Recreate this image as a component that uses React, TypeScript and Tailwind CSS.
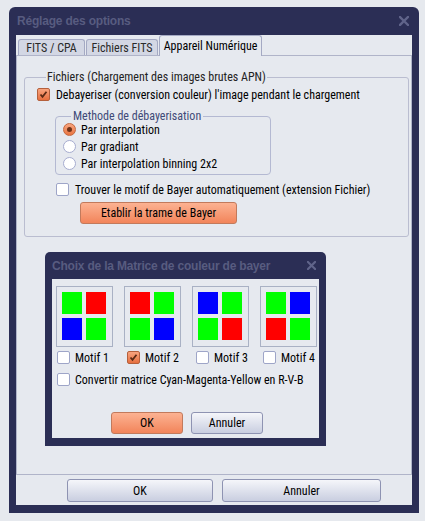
import React from "react";

const G = "#00ff00";
const R = "#ff0000";
const B = "#0000ff";

function Check({ checked = false }: { checked?: boolean }) {
  if (checked) {
    return (
      <span className="w-[13px] h-[13px] shrink-0 rounded-[2px] border border-[#b5603c] bg-linear-to-b from-[#f7a47e] to-[#e66f3e] flex items-center justify-center">
        <svg width="9" height="9" viewBox="0 0 9 9">
          <path d="M1.5 4.5 L3.5 6.8 L7.5 1.8" fill="none" stroke="#5a2a14" strokeWidth="1.8" />
        </svg>
      </span>
    );
  }
  return <span className="w-[13px] h-[13px] shrink-0 rounded-[2px] border border-[#9ea5c8] bg-white" />;
}

function Radio({ checked = false }: { checked?: boolean }) {
  if (checked) {
    return (
      <span className="w-[13px] h-[13px] shrink-0 rounded-full border border-[#c4683f] bg-linear-to-b from-[#f8a57f] to-[#e9743f] flex items-center justify-center">
        <span className="w-[5px] h-[5px] rounded-full bg-[#6e3218]" />
      </span>
    );
  }
  return <span className="w-[13px] h-[13px] shrink-0 rounded-full border border-[#a6acd0] bg-white" />;
}

function CloseX({ size = 10 }: { size?: number }) {
  return (
    <svg width={size} height={size} viewBox="0 0 10 10">
      <path d="M1 1 L9 9 M9 1 L1 9" stroke="#60648a" strokeWidth="2.4" strokeLinecap="square" />
    </svg>
  );
}

function Motif({ cells }: { cells: string[] }) {
  return (
    <div className="w-[57px] h-[61px] border border-[#a9b1c4] pt-[5px] pl-[5px]">
      <div className="grid grid-cols-[20px_20px] grid-rows-[22px_22px] gap-[4px]">
        {cells.map((c, i) => (
          <div key={i} style={{ backgroundColor: c }} />
        ))}
      </div>
    </div>
  );
}

const grayBtn =
  "h-[23px] rounded-[3px] border border-[#8e93b2] bg-linear-to-b from-[#f5f6fa] to-[#c9cee0] flex items-center justify-center text-black";
const orangeBtn =
  "rounded-[3px] border border-[#c27a5c] bg-linear-to-b from-[#fcb292] to-[#f2845a] flex items-center justify-center text-black";

export default function App() {
  const motifs = [
    { cells: [G, R, B, G], label: "Motif 1", checked: false, ml: "ml-[1px]" },
    { cells: [R, G, G, B], label: "Motif 2", checked: true, ml: "ml-[3px]" },
    { cells: [B, G, G, R], label: "Motif 3", checked: false, ml: "ml-[4px]" },
    { cells: [G, B, R, G], label: "Motif 4", checked: false, ml: "ml-[3px]" },
  ];

  return (
    <div className="min-h-[521px] bg-[#e6e9ee] pt-[7px] pl-[9px] font-['Roboto',sans-serif] [font-stretch:75%] text-[12px] text-black">
      <div className="w-[410px] h-[506px] rounded-t-[6px] bg-[#2b2e55] flex flex-col px-[7px] pb-[8px]">
        {/* Title bar */}
        <div className="h-[28px] flex items-center justify-between pl-[1px] pr-[3px] rounded-t-[6px]">
          <span className="font-['Liberation_Sans',sans-serif] [font-stretch:100%] font-bold text-[12px] tracking-[-0.2px] text-[#585c80] whitespace-nowrap">
            Réglage des options
          </span>
          <CloseX />
        </div>

        {/* Client area */}
        <div className="flex-1 bg-[#e6e9ef] flex flex-col">
          {/* Tabs */}
          <div className="h-[20px] flex items-end pl-[2px]">
            <div className="w-[67px] h-[16px] rounded-t-[3px] border border-b-0 border-[#a4a9c3] bg-[#d3d7e4] flex items-center justify-center text-[#2a2a2a] whitespace-nowrap leading-none">
              FITS / CPA
            </div>
            <div className="ml-[1px] w-[72px] h-[16px] rounded-t-[3px] border border-b-0 border-[#a4a9c3] bg-[#d3d7e4] flex items-center justify-center text-[#2a2a2a] whitespace-nowrap leading-none">
              Fichiers FITS
            </div>
            <div className="ml-[1px] w-[103px] h-[21px] -mb-[1px] relative z-10 rounded-t-[3px] border border-b-0 border-[#a4a9c3] bg-[#e6e9ef] flex items-center justify-center whitespace-nowrap leading-none pb-[1px]">
              Appareil Numérique
            </div>
          </div>

          {/* Tab panel */}
          <div className="h-[420px] border border-[#b0b4c9] flex flex-col">
            <fieldset className="mt-[13px] ml-[7px] w-[385px] h-[168px] rounded-[3px] border border-[#babdd0] pl-[12px] pb-[12px]">
              <legend className="ml-[9px] px-[1px] leading-[16px] text-[#222] whitespace-nowrap">
                Fichiers (Chargement des images brutes APN)
              </legend>
              <div className="mt-[1px] h-[17px] flex items-center gap-[6px] whitespace-nowrap">
                <Check checked />
                <span>Debayeriser (conversion couleur) l'image pendant le chargement</span>
              </div>

              <fieldset className="mt-[5px] ml-[18px] w-[216px] h-[67px] rounded-[4px] border border-[#b4b9d2] pl-[7px]">
                <legend className="ml-[8px] px-[2px] leading-[16px] text-[#3f4a78] whitespace-nowrap">
                  Methode de débayerisation
                </legend>
                <div className="-mt-[3px] flex flex-col">
                  <div className="h-[17px] flex items-center gap-[5px] whitespace-nowrap">
                    <Radio checked />
                    <span>Par interpolation</span>
                  </div>
                  <div className="h-[17px] flex items-center gap-[5px] whitespace-nowrap">
                    <Radio />
                    <span>Par gradiant</span>
                  </div>
                  <div className="h-[17px] flex items-center gap-[5px] whitespace-nowrap">
                    <Radio />
                    <span>Par interpolation binning 2x2</span>
                  </div>
                </div>
              </fieldset>

              <div className="mt-[6px] ml-[19px] h-[17px] flex items-center gap-[6px] whitespace-nowrap">
                <Check />
                <span>Trouver le motif de Bayer automatiquement (extension Fichier)</span>
              </div>
              <button className={`mt-[4px] ml-[43px] w-[157px] h-[22px] ${orangeBtn}`}>
                Etablir la trame de Bayer
              </button>
            </fieldset>

            {/* Inner dialog */}
            <div className="mt-[15px] ml-[28px] w-[281px] h-[194px] rounded-t-[5px] bg-[#2b2e55] flex flex-col px-[7px] pb-[8px]">
              <div className="h-[27px] flex items-center justify-between pr-[3px]">
                <span className="font-['Liberation_Sans',sans-serif] [font-stretch:100%] font-bold text-[12px] tracking-[-0.2px] text-[#585c80] whitespace-nowrap">
                  Choix de la Matrice de couleur de bayer
                </span>
                <CloseX size={9} />
              </div>
              <div className="flex-1 bg-[#e6e9ef] flex flex-col pt-[7px] pl-[4px]">
                <div className="flex gap-[11px]">
                  {motifs.map((m) => (
                    <div key={m.label} className="w-[57px] flex flex-col">
                      <Motif cells={m.cells} />
                      <div className={`mt-[2px] h-[17px] flex items-center gap-[5px] whitespace-nowrap ${m.ml}`}>
                        <Check checked={m.checked} />
                        <span>{m.label}</span>
                      </div>
                    </div>
                  ))}
                </div>
                <div className="mt-[5px] ml-[1px] h-[17px] flex items-center gap-[5px] whitespace-nowrap">
                  <Check />
                  <span>Convertir matrice Cyan-Magenta-Yellow en R-V-B</span>
                </div>
                <div className="mt-[24px] ml-[55px] flex gap-[8px]">
                  <button className={`w-[72px] h-[22px] ${orangeBtn}`}>OK</button>
                  <button className={`w-[72px] !h-[22px] ${grayBtn}`}>Annuler</button>
                </div>
              </div>
            </div>
          </div>

          {/* Bottom buttons */}
          <div className="pt-[4px] pl-[51px] flex gap-[9px]">
            <button className={`w-[146px] ${grayBtn}`}>OK</button>
            <button className={`w-[159px] ${grayBtn}`}>Annuler</button>
          </div>
        </div>
      </div>
    </div>
  );
}
